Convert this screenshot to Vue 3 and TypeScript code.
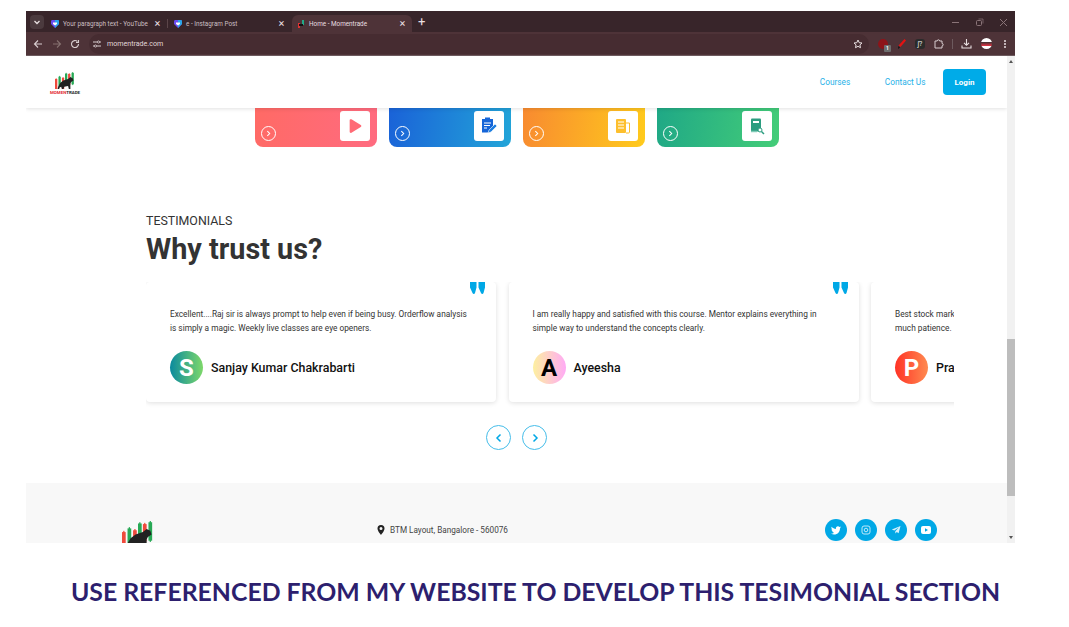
<script setup lang="ts">
type Candle = { x: number; y: number; h: number; c: string }

// candlesticks behind the bull, shared by header and footer logo
const candles: Candle[] = [
  { x: 0, y: 9, h: 14, c: '#ef4a3c' },
  { x: 4.500, y: 6, h: 12, c: '#27a955' },
  { x: 9, y: 7.500, h: 15, c: '#ef4a3c' },
  { x: 13, y: 2, h: 13, c: '#27a955' },
  { x: 17, y: 2.500, h: 14, c: '#ef4a3c' },
  { x: 21.500, y: 1, h: 15, c: '#27a955' },
]

const bull = 'M4 19 7 14l4-3 6-2 3-2.500 3 1.500 1 3-3 2-1 2v7h-2l-1-4-5 1-1 3H9l-1-3-2 1-1 4H3z'

const tiles = [
  { cls: 'red', icon: 'play' },
  { cls: 'blue', icon: 'clip' },
  { cls: 'orange', icon: 'news' },
  { cls: 'green', icon: 'book' },
]

const reviews = [
  {
    text: 'Excellent....Raj sir is always prompt to help even if being busy. Orderflow analysis is simply a magic. Weekly live classes are eye openers.',
    name: 'Sanjay Kumar Chakrabarti',
    letter: 'S',
    cls: 'av-s',
  },
  {
    text: 'I am really happy and satisfied with this course. Mentor explains everything in simple way to understand the concepts clearly.',
    name: 'Ayeesha',
    letter: 'A',
    cls: 'av-a',
  },
  {
    text: 'Best stock market course I have attended. The mentor teaches every topic with much patience.',
    name: 'Prashant Kumar',
    letter: 'P',
    cls: 'av-p',
  },
]
</script>

<template>
  <div class="shot">
    <div class="browser">
      <div class="tabbar">
        <span class="tab-menu">
          <svg width="8" height="8" viewBox="0 0 8 8"><path d="M1.500 3 4 5.500 6.500 3" fill="none" stroke="#e8dfe0" stroke-width="1.300" /></svg>
        </span>
        <div class="tab first">
          <svg class="fav" width="8" height="8" viewBox="0 0 8 8"><path d="M0 1.500C0 .5.500 0 1.500 0h5C7.500 0 8 .5 8 1.500V4L4 8 0 4z" fill="#6a4cf0" /><path d="M4 0h2.500C7.500 0 8 .5 8 1.500V4L4 8z" fill="#2aa8ea" /><path d="M2 2.500h4V4L4 5.500 2 4z" fill="#fff" /></svg>
          <span class="tab-title">Your paragraph text - YouTube</span>
          <span class="tab-x">×</span>
        </div>
        <i class="tab-sep"></i>
        <div class="tab second">
          <svg class="fav" width="8" height="8" viewBox="0 0 8 8"><path d="M0 1.500C0 .5.500 0 1.500 0h5C7.500 0 8 .5 8 1.500V4L4 8 0 4z" fill="#6a4cf0" /><path d="M4 0h2.500C7.500 0 8 .5 8 1.500V4L4 8z" fill="#2aa8ea" /><path d="M2 2.500h4V4L4 5.500 2 4z" fill="#fff" /></svg>
          <span class="tab-title">e - Instagram Post</span>
          <span class="tab-x">×</span>
        </div>
        <div class="tab active">
          <svg class="tab-logo" width="8" height="8" viewBox="0 0 8 8">
            <rect x="1" y="3" width="2" height="5" fill="#d33" />
            <rect x="5" y="0" width="2" height="5" fill="#2a8" />
            <rect x="2" y="4" width="4" height="2" fill="#111" />
          </svg>
          <span class="tab-title">Home - Momentrade</span>
          <span class="tab-x">×</span>
        </div>
        <span class="tab-plus">+</span>
        <div class="win-controls">
          <svg width="9" height="9" viewBox="0 0 9 9"><path d="M1 4.500h7" stroke="#8a7478" /></svg>
          <svg width="9" height="9" viewBox="0 0 9 9"><rect x="1.500" y="2.500" width="5" height="5" rx="1" fill="none" stroke="#8a7478" /><path d="M3.500 1h4.500v4.500" fill="none" stroke="#8a7478" stroke-width=".7" /></svg>
          <svg width="9" height="9" viewBox="0 0 9 9"><path d="M1 1l7 7M8 1 1 8" stroke="#8a7478" /></svg>
        </div>
      </div>

      <div class="toolbar">
        <svg class="nav-ic" width="10" height="10" viewBox="0 0 10 10"><path d="M9 5H1.500M5 1.500 1.500 5 5 8.500" fill="none" stroke="#d8cdcf" stroke-width="1.100" /></svg>
        <svg class="nav-ic" width="10" height="10" viewBox="0 0 10 10"><path d="M1 5h7.500M5 1.500 8.500 5 5 8.500" fill="none" stroke="#85706f" stroke-width="1.100" /></svg>
        <svg class="nav-ic" width="10" height="10" viewBox="0 0 10 10"><path d="M8.500 5A3.500 3.500 0 1 1 7.400 2.500M8.500 1v2.500H6" fill="none" stroke="#d8cdcf" stroke-width="1.100" /></svg>
        <div class="omnibox">
          <svg width="10" height="10" viewBox="0 0 10 10"><path d="M1 3h4.500M7.500 3H9M1 7h1.500M4.500 7H9" stroke="#d8cdcf" /><circle cx="6.500" cy="3" r="1.100" fill="none" stroke="#d8cdcf" stroke-width=".8" /><circle cx="3.500" cy="7" r="1.100" fill="none" stroke="#d8cdcf" stroke-width=".8" /></svg>
          <span class="url">momentrade.com</span>
          <svg class="star" width="10" height="10" viewBox="0 0 10 10"><path d="M5 1l1.200 2.700 2.800.3-2.100 1.900.6 2.800L5 7.300 2.500 8.700l.6-2.800L1 4l2.800-.3z" fill="none" stroke="#e8dfe0" /></svg>
        </div>
        <div class="ext-row">
          <span class="ext ext-red"><b>1</b></span>
          <svg width="10" height="12" viewBox="0 0 10 12"><path d="M7.500 1 9 2.500 3.500 9 1.500 7.500z" fill="#e31212" /><path d="M1.500 8 3 9.500 1 11z" fill="#111" /></svg>
          <span class="ext ext-dark">ʃ?</span>
          <svg width="11" height="11" viewBox="0 0 11 11"><path d="M2 3h2.200a1.200 1.200 0 0 1 2.400 0H9v2.500a1.200 1.200 0 0 1 0 2.400V10H2z" fill="none" stroke="#d8cdcf" /></svg>
          <i class="ext-sep"></i>
          <svg width="11" height="11" viewBox="0 0 11 11"><path d="M5.500 1v6M3 4.800l2.500 2.500L8 4.800M1 7.500V10h9V7.500" fill="none" stroke="#e8dfe0" stroke-width="1.100" /></svg>
          <span class="profile"></span>
          <span class="dots"><i></i><i></i><i></i></span>
        </div>
      </div>

      <div class="viewport">
        <div class="page">
          <header class="site-head">
            <div class="brand">
              <svg width="20" height="17" viewBox="0 0 26 22" class="logo-mark">
                <g v-for="c in candles" :key="c.x">
                  <rect :x="c.x + 1" :y="c.y - 1" width="1" :height="c.h + 2" :fill="c.c" />
                  <rect :x="c.x" :y="c.y" width="3" :height="c.h" :fill="c.c" />
                </g>
                <path :d="bull" fill="#222" />
              </svg>
              <span class="brand-text"><em>MOMEN</em>TRADE</span>
            </div>
            <nav class="site-nav">
              <a>Courses</a>
              <a>Contact Us</a>
              <button type="button" class="login">Login</button>
            </nav>
          </header>

          <div class="tiles">
            <div v-for="t in tiles" :key="t.cls" class="tile" :class="t.cls">
              <span class="tile-go">
                <svg width="7" height="7" viewBox="0 0 6 6"><path d="M2 1l2 2-2 2" fill="none" stroke="#fff" stroke-width=".9" /></svg>
              </span>
              <span class="tile-icon">
                <svg v-if="t.icon === 'play'" width="16" height="16" viewBox="0 0 18 18"><path d="M3 2.500c0-1 1-1.500 2-1L15.500 8c.9.600.9 1.500 0 2L5 16.500c-1 .6-2 0-2-1z" fill="#ff6b76" /></svg>
                <svg v-else-if="t.icon === 'clip'" width="20" height="20" viewBox="0 0 20 20">
                  <path d="M3 3h3V1.500h5V3h3v8l-4 5.500H3z" fill="#1565d8" />
                  <path d="M5 7h7M5 9.500h6M5 12h3" stroke="#fff" />
                  <path d="M9 17l1-3 6-6 2 2-6 6z" fill="#1e7fe0" stroke="#fff" stroke-width=".6" />
                </svg>
                <svg v-else-if="t.icon === 'news'" width="18" height="18" viewBox="0 0 18 18">
                  <rect x="2" y="2" width="10" height="14" rx="1" fill="#fdbf2d" />
                  <path d="M12 6h3.500v9a1 1 0 0 1-1 1H12" fill="none" stroke="#fdbf2d" />
                  <path d="M4 5h6M4 8h6M4 11h6" stroke="#fff" stroke-width="1.200" />
                </svg>
                <svg v-else width="18" height="18" viewBox="0 0 18 18">
                  <rect x="3" y="1.500" width="10" height="13" rx="1" fill="#2c9d80" />
                  <rect x="5" y="4" width="6" height="2" fill="#fff" />
                  <path d="M3 14.500h6" stroke="#7fcab6" stroke-width="1.500" />
                  <circle cx="12" cy="13" r="2" fill="#fff" stroke="#2c9d80" />
                  <path d="M13.500 14.500 16 17" stroke="#2c9d80" stroke-width="1.500" />
                </svg>
              </span>
            </div>
          </div>

          <section class="testimonials">
            <p class="eyebrow">TESTIMONIALS</p>
            <h2 class="title">Why trust us?</h2>
            <div class="carousel">
              <article v-for="r in reviews" :key="r.name" class="review">
                <svg class="quote" width="15" height="12" viewBox="0 0 15 12">
                  <path d="M0 0h6.500v5.500L5 11c-.3 1.300-2 1.300-2.500 0L0 5.500zM8.500 0H15v5.500L13.500 11c-.4 1.300-2 1.300-2.500 0L8.500 5.500z" fill="#00a8e6" />
                </svg>
                <p class="review-text">{{ r.text }}</p>
                <div class="person">
                  <span class="avatar" :class="r.cls">{{ r.letter }}</span>
                  <span class="person-name">{{ r.name }}</span>
                </div>
              </article>
            </div>
            <div class="pager">
              <button type="button" class="pager-btn" aria-label="Previous">
                <svg width="10" height="10" viewBox="0 0 10 10"><path d="M6.500 1.500 3 5l3.500 3.500" fill="none" stroke="#00a8e6" stroke-width="1.500" /></svg>
              </button>
              <button type="button" class="pager-btn" aria-label="Next">
                <svg width="10" height="10" viewBox="0 0 10 10"><path d="M3.500 1.500 7 5 3.500 8.500" fill="none" stroke="#00a8e6" stroke-width="1.500" /></svg>
              </button>
            </div>
          </section>

          <footer class="site-foot">
            <svg width="32" height="32" viewBox="0 0 26 26" class="foot-logo">
              <g v-for="c in candles" :key="c.x">
                <rect :x="c.x + 1" :y="c.y - 1" width="1" :height="c.h + 2" :fill="c.c" />
                <rect :x="c.x" :y="c.y" width="3" :height="c.h" :fill="c.c" />
              </g>
              <path :d="bull" fill="#222" />
            </svg>
            <div class="address">
              <svg width="8" height="10" viewBox="0 0 8 10"><path d="M4 0a3.500 3.500 0 0 0-3.500 3.500C.5 6 4 10 4 10s3.500-4 3.500-6.500A3.500 3.500 0 0 0 4 0zm0 5a1.500 1.500 0 1 1 0-3 1.500 1.500 0 0 1 0 3z" fill="#222" />
              </svg>
              <span>BTM Layout, Bangalore - 560076</span>
            </div>
            <div class="socials">
              <span class="soc">
                <svg width="10" height="9" viewBox="0 0 24 20"><path d="M24 2.400c-.9.400-1.800.7-2.800.8 1-.6 1.800-1.600 2.200-2.700-1 .6-2 1-3.100 1.200A4.900 4.900 0 0 0 11.900 6.200C7.800 6 4.200 4.100 1.700.9c-1.400 2.300-.7 5.200 1.500 6.600-.8 0-1.600-.2-2.200-.6 0 2.400 1.700 4.500 4 5-.7.200-1.500.2-2.200.1.600 2 2.500 3.400 4.600 3.400A9.900 9.900 0 0 1 0 17.400 14 14 0 0 0 7.500 19.600c9.100 0 14.300-7.700 14-14.600 1-.7 1.800-1.600 2.500-2.600z" fill="#fff" /></svg>
              </span>
              <span class="soc">
                <svg width="10" height="10" viewBox="0 0 10 10"><rect x="1" y="1" width="8" height="8" rx="2" fill="none" stroke="#bfe9fa" /><circle cx="5" cy="5" r="1.800" fill="none" stroke="#bfe9fa" /></svg>
              </span>
              <span class="soc">
                <svg width="10" height="10" viewBox="0 0 10 10"><path d="M9.500 1 .8 4.600l2.500 1L8 2.300 4.300 6.300v2.300l1.500-1.500 1.800 1.200z" fill="#d5f1fc" /></svg>
              </span>
              <span class="soc">
                <svg width="10" height="8" viewBox="0 0 10 8"><rect width="10" height="8" rx="2" fill="#fff" /><path d="M4 2.200v3.600L7 4z" fill="#00a8e6" /></svg>
              </span>
            </div>
          </footer>
        </div>

        <div class="scrollbar">
          <span class="arrow up"></span>
          <span class="thumb"></span>
          <span class="arrow down"></span>
        </div>
      </div>
    </div>

    <p class="caption">USE REFERENCED FROM MY WEBSITE TO DEVELOP THIS TESIMONIAL SECTION</p>
  </div>
</template>

<style scoped>
.shot {
  width: 1069px;
  height: 627px;
  padding: 11px 0 0 26px;
  box-sizing: border-box;
  background: #fff;
  overflow: hidden;
  font-family: Roboto, 'Liberation Sans', sans-serif;
}

.browser {
  width: 989px;
  height: 532px;
  display: flex;
  flex-direction: column;
  overflow: hidden;
}

.tabbar {
  height: 21px;
  flex: none;
  display: flex;
  align-items: flex-end;
  background: #38252a;
  color: #cbbfc1;
  font-size: 6.350px;
}

.tab-menu {
  width: 14px;
  height: 14px;
  margin: 0 7px 3px 4px;
  border-radius: 4px;
  background: #4b3a3e;
  display: flex;
  align-items: center;
  justify-content: center;
}

.tab {
  height: 17px;
  display: flex;
  align-items: center;
  box-sizing: border-box;
}

.tab.first {
  width: 116px;
}

.tab.second {
  width: 117px;
  margin-left: 6px;
}

.tab.active {
  width: 120px;
  margin-left: 1px;
  padding-left: 5px;
  border-radius: 6px 6px 0 0;
  background: #4e3338;
  color: #e8dfe0;
}

.tab-sep {
  width: 1px;
  height: 9px;
  margin-bottom: 4px;
  background: #5b4549;
}

.fav {
  flex: none;
  margin-right: 4px;
}

.tab-logo {
  flex: none;
  margin-right: 4px;
}

.tab-title {
  flex: 1;
  min-width: 0;
  white-space: nowrap;
}

.tab-x {
  width: 9px;
  margin: 0 5px 0 0;
  font-size: 11px;
  line-height: 1;
  text-align: center;
  color: #e8dfe0;
}

.tab-plus {
  margin: 0 0 3px 6px;
  font-size: 13px;
  line-height: 14px;
  color: #e8dfe0;
}

.win-controls {
  margin: 0 7px 5px auto;
  display: flex;
  gap: 15px;
}

.toolbar {
  height: 24px;
  flex: none;
  display: flex;
  align-items: center;
  box-sizing: border-box;
  padding-left: 7px;
  background: #4e3338;
  border-bottom: 1px solid #6d5a5e;
}

.nav-ic {
  flex: none;
  margin-right: 8.500px;
}

.omnibox {
  width: 780px;
  height: 20px;
  flex: none;
  padding: 0 6px 0 3px;
  box-sizing: border-box;
  display: flex;
  align-items: center;
  gap: 5.500px;
  border-radius: 10px;
  background: #462c31;
}

.url {
  font-size: 7.100px;
  color: #e0d6d8;
}

.star {
  margin-left: auto;
}

.ext-row {
  flex: 1;
  display: grid;
  grid-template-columns: 18px 19px 18px 19px 8px 21px 18px 19px;
  align-items: center;
  justify-items: center;
  padding-left: 5.500px;
}

.ext {
  position: relative;
  width: 10px;
  height: 10px;
  border-radius: 50%;
}

.ext-red {
  background: #8d1419;
}

.ext-red b {
  position: absolute;
  right: -3px;
  bottom: -3px;
  width: 7px;
  height: 7px;
  background: #6d6d6d;
  border-radius: 1px;
  color: #fff;
  font-size: 5px;
  line-height: 7px;
  text-align: center;
}

.ext-dark {
  border-radius: 3px;
  background: #2b2b2b;
  color: #e8e8e8;
  font-size: 7px;
  line-height: 10px;
  text-align: center;
}

.ext-sep {
  width: 1px;
  height: 10px;
  background: #6d5a5e;
}

.profile {
  width: 11px;
  height: 11px;
  border-radius: 50%;
  background: linear-gradient(180deg, #fff 35%, #333 35%, #d34 70%, #fff 70%);
}

.dots {
  display: flex;
  flex-direction: column;
  gap: 1px;
}

.dots i {
  width: 2px;
  height: 2px;
  border-radius: 50%;
  background: #e8dfe0;
}

.viewport {
  flex: 1;
  min-height: 0;
  display: flex;
  background: #fff;
}

.page {
  flex: 1;
  min-width: 0;
  display: flex;
  flex-direction: column;
  overflow: hidden;
}

.site-head {
  position: relative;
  height: 52px;
  flex: none;
  display: flex;
  align-items: center;
  justify-content: space-between;
  padding: 0 21px 0 23px;
  background: #fff;
  box-shadow: 0 1px 4px rgba(0, 0, 0, 0.12);
}

.brand {
  width: 32px;
  display: flex;
  flex-direction: column;
  align-items: center;
  margin-top: 4px;
}

.logo-mark {
  margin-bottom: 1px;
}

.brand-text {
  font-size: 4.400px;
  font-weight: 700;
  line-height: 6px;
  color: #222;
  white-space: nowrap;
}

.brand-text em {
  font-style: normal;
  color: #e3262b;
}

.site-nav {
  display: flex;
  align-items: center;
  gap: 34.500px;
  font-size: 8.300px;
  color: #1fb1e8;
}

.login {
  width: 43px;
  height: 26px;
  margin-left: -17px;
  padding: 0;
  border: 0;
  border-radius: 4px;
  background: #00abe8;
  color: #fff;
  font: 700 8px Roboto, 'Liberation Sans', sans-serif;
}

.tiles {
  display: flex;
  justify-content: center;
  gap: 12px;
  flex: none;
}

.tile {
  width: 122px;
  height: 39px;
  box-sizing: border-box;
  padding: 3px 7px 0 6px;
  display: flex;
  justify-content: space-between;
  border-radius: 0 0 8px 8px;
}

.tile.red {
  background: linear-gradient(100deg, #ff6a65, #ff6b80);
}

.tile.blue {
  background: linear-gradient(100deg, #1a62d8, #22a5d8);
}

.tile.orange {
  background: linear-gradient(100deg, #f88a30, #ffcb1c);
}

.tile.green {
  background: linear-gradient(100deg, #1fa886, #44cd78);
}

.tile-go {
  width: 13px;
  height: 13px;
  margin-top: 15px;
  border: 1px solid #fff;
  border-radius: 50%;
  display: flex;
  align-items: center;
  justify-content: center;
}

.tile-icon {
  width: 30px;
  height: 30px;
  border-radius: 3px;
  background: #fff;
  display: flex;
  align-items: center;
  justify-content: center;
}

.testimonials {
  flex: none;
  padding-left: 120px;
  margin-top: 66px;
}

.eyebrow {
  margin: 0;
  font-size: 12.400px;
  line-height: 15px;
  color: #333;
}

.title {
  margin: 4px 0 0;
  font-size: 28.800px;
  font-weight: 700;
  line-height: 34px;
  color: #333;
}

.carousel {
  width: 808px;
  height: 128px;
  margin-top: 16px;
  display: flex;
  gap: 12.500px;
  overflow: hidden;
}

.review {
  position: relative;
  width: 350px;
  height: 120px;
  flex: none;
  box-sizing: border-box;
  padding: 26px 24px 0;
  border-radius: 4px;
  background: #fff;
  box-shadow: 0 1px 5px rgba(0, 0, 0, 0.13);
}

.quote {
  position: absolute;
  top: 0;
  right: 11px;
}

.review-text {
  margin: 0;
  height: 27px;
  font-size: 8.300px;
  line-height: 13.500px;
  color: #333;
}

.person {
  margin-top: 16px;
  display: flex;
  align-items: center;
  gap: 8px;
}

.avatar {
  width: 33px;
  height: 33px;
  flex: none;
  border-radius: 50%;
  display: flex;
  align-items: center;
  justify-content: center;
  font-size: 24px;
  font-weight: 700;
  color: #fff;
}

.av-s {
  background: linear-gradient(90deg, #0a8a9e, #7ed86a);
}

.av-a {
  background: linear-gradient(90deg, #fdf0a0, #ffaaf5);
  color: #000;
}

.av-p {
  background: linear-gradient(90deg, #ff3326, #ff8a50);
}

.person-name {
  padding-bottom: 1px;
  font-size: 12.400px;
  font-weight: 500;
  color: #111;
  white-space: nowrap;
}

.pager {
  width: 741px;
  margin-top: 15px;
  display: flex;
  justify-content: center;
  gap: 11px;
}

.pager-btn {
  width: 25px;
  height: 25px;
  padding: 0;
  border: 1px solid #45bde9;
  border-radius: 50%;
  background: #fff;
  display: flex;
  align-items: center;
  justify-content: center;
}

.site-foot {
  height: 60px;
  margin-top: 33px;
  flex: none;
  display: flex;
  align-items: flex-start;
  padding: 36px 70px 0 96px;
  box-sizing: border-box;
  background: #f8f8f8;
  overflow: hidden;
}

.foot-logo {
  flex: none;
  margin-top: 2px;
}

.address {
  margin: 6px 0 0 223px;
  display: flex;
  align-items: center;
  gap: 5px;
  font-size: 8.200px;
  color: #444;
  white-space: nowrap;
}

.socials {
  margin-left: auto;
  display: flex;
  gap: 8px;
}

.soc {
  width: 22px;
  height: 22px;
  border-radius: 50%;
  background: #00a8e6;
  display: flex;
  align-items: center;
  justify-content: center;
}

.scrollbar {
  width: 8px;
  flex: none;
  display: flex;
  flex-direction: column;
  align-items: center;
  background: #f1f1f1;
}

.thumb {
  width: 8px;
  height: 157px;
  margin-top: 276px;
  background: #bdbdbd;
}

.arrow {
  width: 0;
  height: 0;
  flex: none;
  border-left: 2.500px solid transparent;
  border-right: 2.500px solid transparent;
}

.arrow.up {
  margin-top: 4px;
  border-bottom: 3px solid #555;
}

.arrow.down {
  margin-top: auto;
  margin-bottom: 4px;
  border-top: 3px solid #555;
}

.caption {
  margin: 35px 0 0 -26px;
  width: 1071px;
  text-align: center;
  font-family: Lato, 'Noto Sans', sans-serif;
  font-size: 24.800px;
  font-weight: 700;
  line-height: 28px;
  color: #2d1f6e;
  white-space: nowrap;
}
</style>
